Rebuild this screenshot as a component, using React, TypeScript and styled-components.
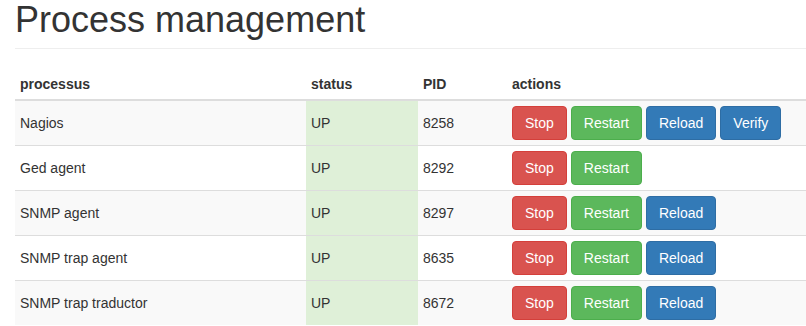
import React from 'react';
import styled, { createGlobalStyle } from 'styled-components';

const GlobalStyle = createGlobalStyle`
	html, body {
		margin: 0;
		padding: 0;
		background: #fff;
	}
	body {
		font-family: 'Liberation Sans', Arial, sans-serif;
		font-size: 14px;
		line-height: 1.42857;
		color: #333;
	}
`;

type Kind = 'danger' | 'success' | 'primary';

const palette: Record<Kind, { bg: string; border: string }> = {
	danger: { bg: '#d9534f', border: '#d43f3a' },
	success: { bg: '#5cb85c', border: '#4cae4c' },
	primary: { bg: '#337ab7', border: '#2e6da4' },
};

const processes = [
	{ name: 'Nagios', pid: 8258, actions: ['Stop', 'Restart', 'Reload', 'Verify'] },
	{ name: 'Ged agent', pid: 8292, actions: ['Stop', 'Restart'] },
	{ name: 'SNMP agent', pid: 8297, actions: ['Stop', 'Restart', 'Reload'] },
	{ name: 'SNMP trap agent', pid: 8635, actions: ['Stop', 'Restart', 'Reload'] },
	{ name: 'SNMP trap traductor', pid: 8672, actions: ['Stop', 'Restart', 'Reload'] },
];

const kindOf = (action: string): Kind => {
	if (action === 'Stop') return 'danger';
	if (action === 'Restart') return 'success';
	return 'primary';
};

export default function App() {
	return (
		<>
			<GlobalStyle />
			<Page>
				<PageHeader>
					<Title>Process management</Title>
				</PageHeader>
				<Table>
					<colgroup>
						<col style={{ width: 291 }} />
						<col style={{ width: 112 }} />
						<col style={{ width: 89 }} />
						<col />
					</colgroup>
					<thead>
						<tr>
							<Th>processus</Th>
							<Th>status</Th>
							<Th>PID</Th>
							<Th>actions</Th>
						</tr>
					</thead>
					<tbody>
						{processes.map((p, i) => (
							<Row key={p.name} $striped={i % 2 === 0}>
								<Td $first={i === 0}>{p.name}</Td>
								<StatusCell $first={i === 0}>UP</StatusCell>
								<Td $first={i === 0}>{p.pid}</Td>
								<Td $first={i === 0}>
									<Actions>
										{p.actions.map((a) => (
											<Button key={a} $kind={kindOf(a)}>
												{a}
											</Button>
										))}
									</Actions>
								</Td>
							</Row>
						))}
					</tbody>
				</Table>
			</Page>
		</>
	);
}

const Page = styled.div`
	padding-left: 15px;
`;

const PageHeader = styled.div`
	padding-bottom: 9px;
	margin-bottom: 20px;
	border-bottom: 1px solid #eee;
`;

const Title = styled.h1`
	margin: 0;
	font-size: 36px;
	font-weight: 500;
	line-height: 39px;
	color: #333;
`;

const Table = styled.table`
	width: 100%;
	table-layout: fixed;
	border-collapse: separate;
	border-spacing: 0;
`;

const Th = styled.th`
	text-align: left;
	font-weight: bold;
	padding: 5px;
	line-height: 20px;
	vertical-align: bottom;
	border-bottom: 2px solid #ddd;
`;

const Row = styled.tr<{ $striped: boolean }>`
	background: ${(p) => (p.$striped ? '#f9f9f9' : '#fff')};
`;

const Td = styled.td<{ $first?: boolean }>`
	padding: 5px;
	line-height: 20px;
	vertical-align: middle;
	border-top: ${(p) => (p.$first ? 'none' : '1px solid #ddd')};
`;

const StatusCell = styled(Td)`
	background: #dff0d8;
`;

const Actions = styled.div`
	display: flex;
	gap: 4px;
`;

const Button = styled.button<{ $kind: Kind }>`
	font-family: inherit;
	font-size: 14px;
	line-height: 20px;
	padding: 6px 12px;
	border-radius: 4px;
	color: #fff;
	cursor: pointer;
	background: ${(p) => palette[p.$kind].bg};
	border: 1px solid ${(p) => palette[p.$kind].border};
`;
